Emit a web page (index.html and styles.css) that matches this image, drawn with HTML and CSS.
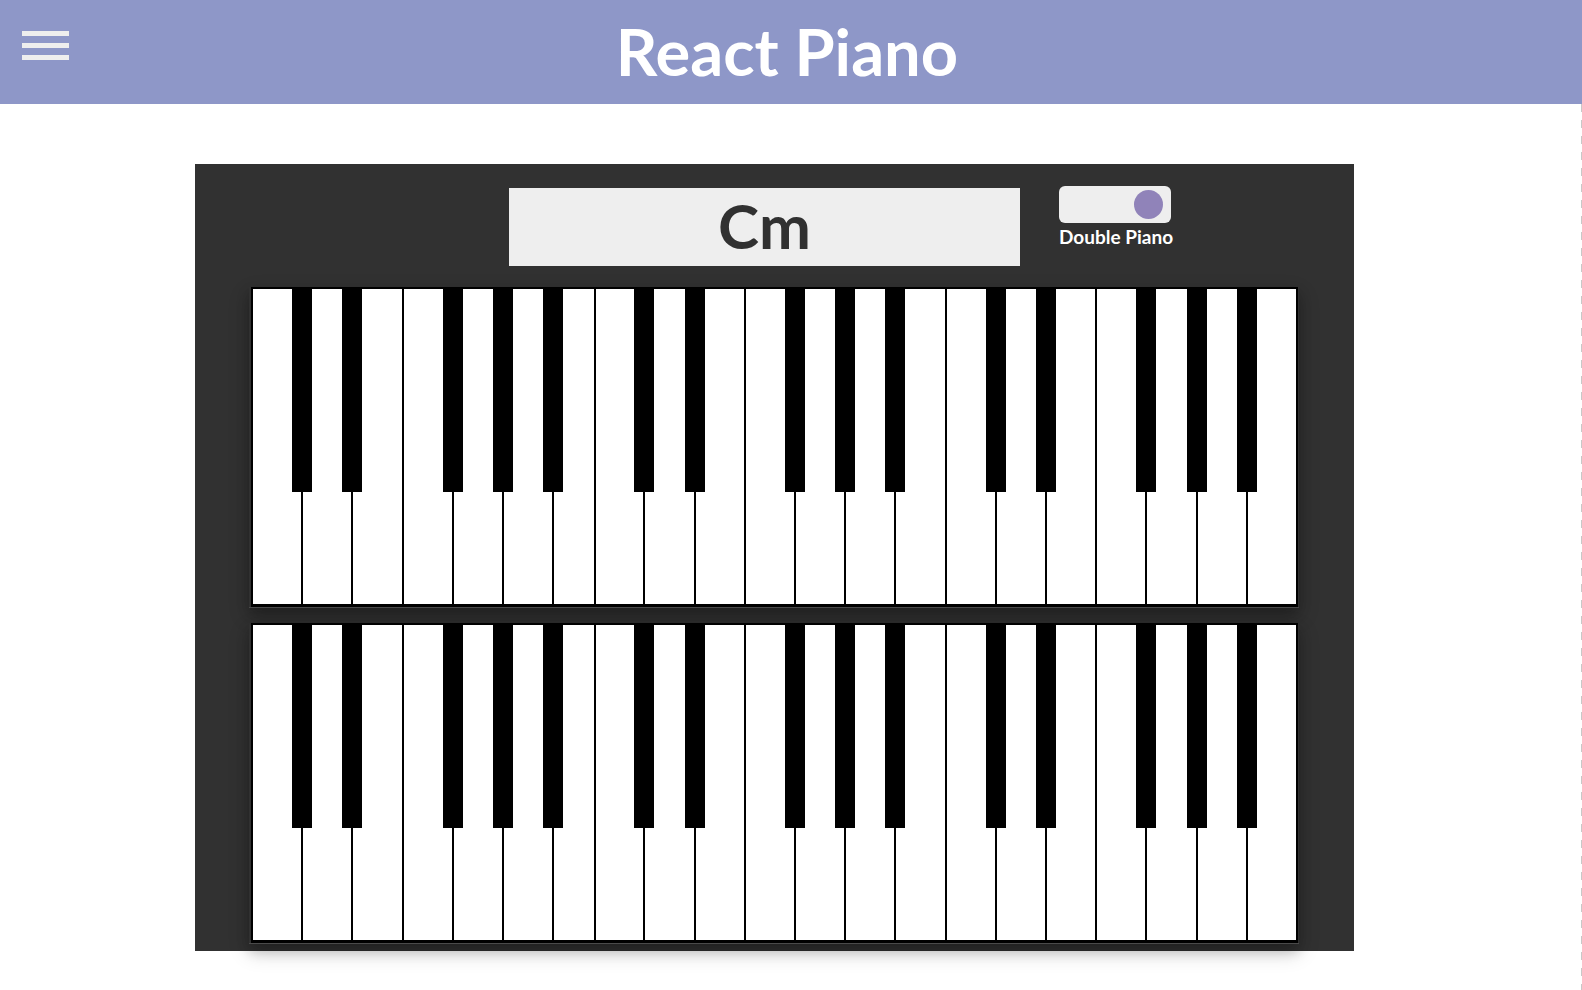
FILE: index.html
```
<!DOCTYPE html>
<html lang="en">
<head>
<meta charset="utf-8">
<title>React Piano</title>
<link rel="stylesheet" href="styles.css">
</head>
<body>
<header class="header">
  <button class="menu" type="button" aria-label="Menu"><span class="bar"></span><span class="bar"></span><span class="bar"></span></button>
  <h1 class="title">React Piano</h1>
</header>
<main class="main">
  <section class="case">
    <div class="toolbar">
      <output class="display">Cm</output>
      <div class="option">
        <input class="switch" type="checkbox" role="switch" id="double" checked>
        <label class="option-label" for="double">Double Piano</label>
      </div>
    </div>
    <div class="keyboard"><ul class="keys"></ul></div>
    <div class="keyboard"><ul class="keys"></ul></div>
  </section>
</main>
<script src="piano.js"></script>
</body>
</html>
```
FILE: styles.css
```
* { box-sizing: border-box; }
body {
  margin: 0;
  min-height: 100vh;
  display: flex;
  flex-direction: column;
  background: #fff;
  font-family: Lato, "Open Sans", sans-serif;
  font-weight: 700;
}
.header {
  height: 104px;
  padding: 0 22px;
  display: grid;
  grid-template-columns: 48px 1fr 56px;
  align-items: start;
  background: #8e97c8;
}
.menu {
  width: 47px;
  margin-top: 31px;
  padding: 0;
  border: 0;
  background: none;
  display: flex;
  flex-direction: column;
  gap: 7px;
}
.bar { width: 100%; height: 5px; background: #eee; }
.title {
  margin: 0;
  padding-top: 12px;
  text-align: center;
  color: #fff;
  font-size: 65px;
  line-height: 78px;
}
.main {
  flex: 1;
  padding: 60px 33px 24px 0;
  background: repeating-linear-gradient(#c8c8c8 0 8px, #fff 8px 16px) right top / 1px 100% no-repeat;
}
.case {
  width: calc(100% - 390px);
  margin: 0 auto;
  padding: 22px 55px 7px 54px;
  background: #313131;
}
.toolbar {
  display: grid;
  grid-template-columns: 1fr 511px 1fr;
  align-items: start;
  margin: 0 19px 21px 0;
}
.display {
  grid-column: 2;
  height: 78px;
  margin-top: 2px;
  background: #eee;
  color: #313131;
  text-align: center;
  font-size: 62px;
  line-height: 74px;
}
.option {
  margin-left: 39px;
  display: flex;
  flex-direction: column;
  align-items: flex-start;
}
.switch {
  appearance: none;
  width: 112px;
  height: 37px;
  margin: 0;
  padding: 4px 8px;
  border-radius: 6px;
  background: #eee;
  display: flex;
}
.switch::before {
  content: "";
  width: 29px;
  height: 29px;
  border-radius: 50%;
  background: #9083b9;
}
.switch:checked { justify-content: flex-end; }
.option-label {
  margin-top: 2px;
  color: #fff;
  font-size: 19px;
  line-height: 24px;
  white-space: nowrap;
}
.keyboard {
  padding: 0 1px 0 2px;
  border-bottom: 1px solid #4a4a4a;
  box-shadow: 0 6px 12px rgba(0, 0, 0, .2), 0 8px 20px rgba(0, 0, 0, .2);
}
.keyboard + .keyboard { margin-top: 15px; }
.keys {
  height: 320px;
  margin: 0;
  padding: 2px 2px 3px;
  list-style: none;
  display: flex;
  gap: 2px;
  background: #000;
}
.slot { position: relative; flex: 48 1 0; display: flex; }
.slot.narrow { flex-grow: 40; }
.slot.narrow + .slot { flex-grow: 47; }
.white { flex: 1; padding: 0; border: 0; background: #fff; }
.black {
  position: absolute;
  z-index: 1;
  top: 0;
  right: -11px;
  width: 20px;
  height: 203px;
  padding: 0;
  border: 0;
  background: #000;
}
```
FILE: piano.js
```
const notes = ["C", "D", "E", "F", "G", "A", "B"];
const sharps = ["C", "D", "F", "G", "A"];

function makeKey(kind, note) {
  const key = document.createElement("button");
  key.type = "button";
  key.className = kind;
  key.setAttribute("aria-label", note);
  return key;
}

document.querySelectorAll(".keys").forEach((keys) => {
  for (let octave = 3; octave < 6; octave++) {
    notes.forEach((note) => {
      const slot = document.createElement("li");
      slot.className = note === "B" && octave === 3 ? "slot narrow" : "slot";
      slot.append(makeKey("white", note + octave));
      if (sharps.includes(note)) slot.append(makeKey("black", note + "#" + octave));
      keys.append(slot);
    });
  }
});
```
